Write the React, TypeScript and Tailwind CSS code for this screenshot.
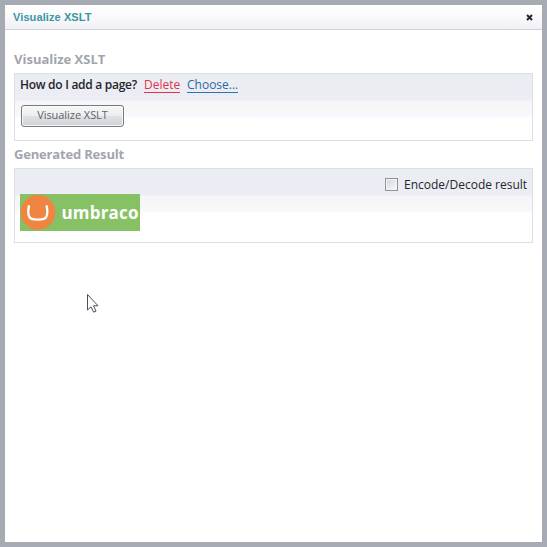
function Panel({ className, children }: { className: string; children: React.ReactNode }) {
  return (
    <section
      className={`border border-[#dcdfe3] bg-[linear-gradient(#e9edf1_0px,#ededf5_26px,#f5f5f7_27px,#f9f9fd_43px,#fff_44px)] ${className}`}
    >
      {children}
    </section>
  );
}

function Heading({ className = "", children }: { className?: string; children: React.ReactNode }) {
  return (
    <h2 className={`whitespace-nowrap text-[13px] font-bold leading-[18px] text-[#a2a5ad] ${className}`}>{children}</h2>
  );
}

function UmbracoLogo() {
  return (
    <svg width="120" height="37" viewBox="0 0 120 37" className="block">
      <rect width="120" height="37" fill="#87c166" />
      <circle cx="18" cy="18.3" r="17.4" fill="#ef8541" />
      <path
        d="M10 12.4 H8.8 C7.6 19.5 8.2 23.3 11.1 24.6 C14.3 26 21.3 26 24.5 24.6 C27.4 23.3 28 19.5 26.8 12.4 H25.6"
        fill="none"
        stroke="#fff"
        strokeWidth="2.4"
      />
      <text x="41.5" y="25" fill="#fff" fontSize="17" fontWeight="700" textLength="77" lengthAdjust="spacing">
        umbraco
      </text>
    </svg>
  );
}

export default function App() {
  return (
    <div className="relative h-[547px] w-[547px] bg-[#a6abb3] p-[5px] font-['Open_Sans','Noto_Sans',sans-serif] text-xs leading-4 text-[#24252b]">
      <div className="flex h-[537px] flex-col bg-white">
        <header className="flex h-[25px] shrink-0 items-center justify-between border-b border-[#d0d2db] bg-[linear-gradient(#fff_0%,#fbfbfc_35%,#f1f0f6_100%)] pl-2 pr-[9px]">
          <h1 className="whitespace-nowrap font-['Liberation_Sans',Arial,sans-serif] text-[11px] font-bold tracking-[0.1px] text-[#3a96a5]">
            Visualize XSLT
          </h1>
          <svg width="7" height="7" viewBox="0 0 7 7" className="block">
            <path d="M1 1 L6 6 M6 1 L1 6" stroke="#25282b" strokeWidth="2" />
          </svg>
        </header>
        <main className="flex flex-col pl-[9px] pr-[9px] pt-5">
          <Heading>Visualize XSLT</Heading>
          <Panel className="mt-[5px] h-[68px] px-[5px] pt-[3px]">
            <div className="flex whitespace-nowrap">
              <span className="w-[124px] font-semibold tracking-[-0.28px]">How do I add a page?</span>
              <a className="h-4 w-9 border-b border-[#e0344b] text-[#e0344b]">Delete</a>
              <a className="ml-[7px] h-4 w-[51px] border-b border-[#3272ad] text-[#2b69a5]">Choose...</a>
            </div>
            <button className="ml-px mt-3 flex h-[22px] w-[103px] items-center justify-center whitespace-nowrap rounded-[3px] border border-[#777b81] bg-[linear-gradient(#f6f7f8_0%,#eceeef_48%,#dfe2e4_52%,#cdd2d6_100%)] pb-[2px] text-[11px] tracking-[-0.05px] text-[#606369] shadow-[inset_0_0_0_1px_#f7f8f9]">
              Visualize XSLT
            </button>
          </Panel>
          <Heading className="mt-[4px] tracking-[-0.18px]">Generated Result</Heading>
          <Panel className="mt-[5px] h-[75px] px-[5px] pt-[7px]">
            <label className="flex h-[18px] items-start justify-end whitespace-nowrap">
              <span className="mr-[6px] mt-[2px] h-[13px] w-[13px] border border-[#8f9398] bg-[linear-gradient(135deg,#d2d6da,#f8f9fa)] shadow-[inset_0_0_0_1px_#f4f4f4]" />
              <span className="mt-px w-[123px]">Encode/Decode result</span>
            </label>
            <UmbracoLogo />
          </Panel>
        </main>
      </div>
      <svg width="14" height="21" viewBox="0 0 14 21" className="absolute left-[86px] top-[293px]">
        <path
          d="M1.5 1.5 V17 L5 13.8 L7.7 19.2 L10 18.1 L7.5 12.8 H12 Z"
          fill="#fff"
          stroke="#4b4e5c"
          strokeWidth="1"
        />
      </svg>
    </div>
  );
}
